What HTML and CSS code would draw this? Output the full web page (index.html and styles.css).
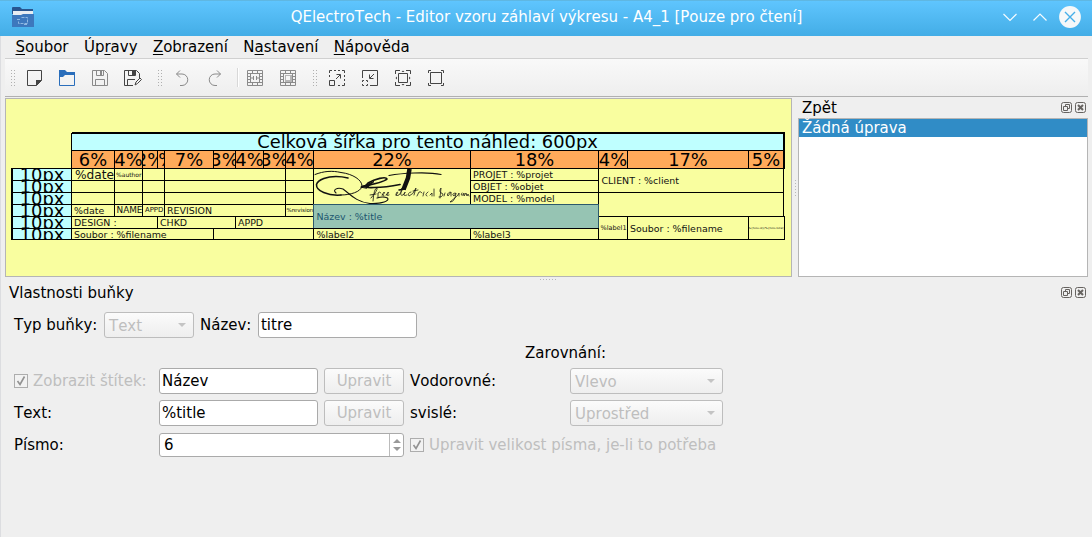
FILE: index.html
```html
<!DOCTYPE html>
<html lang="cs">
<head>
<meta charset="utf-8">
<title>QElectroTech</title>
<link rel="stylesheet" href="styles.css">
</head>
<body>
<header class="titlebar">
  <svg class="app-icon" width="22" height="20" viewBox="0 0 22 20"><path d="M0 1q0-1 1-1h7l2 2h11v5H0z" fill="#28558f"/><path d="M1 4h20v5H1z" fill="#e8edf2"/><path d="M0 8h9l2-1h11v13H0z" fill="#3d78bd"/><path d="M9.500 10.500h6v6h-9v-3M5 12.500h4M12 17.500h4" fill="none" stroke="#8fb8e2" stroke-dasharray="3 1"/></svg>
  <span class="title">QElectroTech - Editor vzoru záhlaví výkresu - A4_1 [Pouze pro čtení]</span>
  <svg class="win-buttons" width="80" height="24" viewBox="0 0 80 24"><path d="M1.500 9l6.500 6.500 6.500-6.500M31.500 15.500L38 9l6.500 6.500" fill="none" stroke="#f4fbff" stroke-width="1.200"/><circle cx="68" cy="12" r="10.900" fill="#f6f8f9"/><path d="M63 7l10 10M73 7L63 17" stroke="#46afe8" stroke-width="1.400"/></svg>
</header>
<nav class="menubar"><span><u>S</u>oubor</span><span>Úp<u>r</u>avy</span><span><u>Z</u>obrazení</span><span>N<u>a</u>stavení</span><span><u>N</u>ápověda</span></nav>
<div class="toolbar">
  <i class="handle"></i>
  <svg class="tool new" viewBox="0 0 16 16"><path d="M.5.5h14v10l-5 5h-9z" class="dark"/><path d="M9 16v-6h6z" fill="#444"/></svg>
  <svg class="tool open" viewBox="0 0 16 16"><path d="M0 0h6l2 2h8v3H6L4 7H0z" fill="#2a6ebb"/><path d="M.5 4v11.500h15V4" fill="none" stroke="#2a6ebb"/></svg>
  <svg class="tool save" viewBox="0 0 16 16"><path d="M.5.500h12l3 3v12H.5zM4.500.500v5h7v-5M3.500 15.500v-6h9v6" class="grey"/><path d="M8 1h2v4H8z" fill="#8a8a8a"/></svg>
  <svg class="tool saveas" viewBox="0 0 18 16"><path d="M9 15.500H.5V.5h12l3 3V8M4.500.500v5h7v-5M3.500 15.500v-6H11" class="dark"/><path d="M8 1h3v4H8z" fill="#444"/><path d="M11 15l1-3 4-4 1.500 1.500-4 4z" class="dark"/></svg>
  <i class="handle second"></i>
  <svg class="tool undo" viewBox="0 0 16 16"><path d="M5 .5l-3.500 3.500L5 7.500M1.500 4H7a5.600 5.600 0 0 1 0 11.500H5" class="grey"/></svg>
  <svg class="tool redo" viewBox="0 0 16 16"><path d="M9 .5L12.500 4 9 7.500M12.500 4H7a5.600 5.600 0 0 0 0 11.500h2" class="grey"/></svg>
  <i class="separator"></i>
  <svg class="tool merge" viewBox="0 0 16 16"><path d="M.5.500h15v15H.5zM0 3.500h16M0 12.500h16M5.500 0v4M10.500 0v4M5.500 12v4M10.500 12v4M0 6.500h4M0 9.500h4M12 6.500h4M12 9.500h4M3.500 4v8M12.500 4v8M6.500 6v4M9.500 6v4M4 8h2M10 8h2" class="grey"/></svg>
  <svg class="tool split" viewBox="0 0 16 16"><path d="M.5.500h15v15H.5zM0 3.500h16M0 12.500h16M5.500 0v4M10.500 0v4M5.500 12v4M10.500 12v4M0 6.500h4M0 9.500h4M12 6.500h4M12 9.500h4M3.500 4v8M12.500 4v8" class="grey"/><path d="M5 5h7v7H5z" fill="#b5b5b5"/><path d="M6 6h4v4H6z" fill="#f5f5f5"/></svg>
  <i class="handle third"></i>
  <svg class="tool zin" viewBox="0 0 16 16"><path d="M.5 3V.5H3M5 .5h2M9 .5h2M13 .5h2.500V3M15.500 5v2M15.500 9v2M15.500 13v2.500H13M11 15.500H9M.5 5v2" class="dark"/><path d="M.5 10.500h5v5h-5zM7 9l4-4M7.500 4.500h4v4" class="dark"/></svg>
  <svg class="tool zout" viewBox="0 0 16 16"><path d="M.5 8V.5h15v15H8" class="dark"/><path d="M.5 12v-1.500H2M4 10.500h1.500V12M5.500 14v1.500H4M2 15.500H.5V14" class="dark"/><path d="M12 4L8 8M7.500 4.500v4h4" class="dark"/></svg>
  <svg class="tool zfit" viewBox="0 0 16 16"><path d="M.5 4V.5H5M11 .5h4.500V4M15.500 12v3.500H11M5 15.500H.5V12M3.500 3.500h9v9h-9z" class="dark"/><path d="M6.500 2L8 .5 9.500 2zM6.500 14L8 15.500 9.500 14zM2 6.500L.5 8 2 9.500zM14 6.500L15.500 8 14 9.500z" fill="#444"/></svg>
  <svg class="tool zone" viewBox="0 0 16 16"><path d="M.5 3V.5H3M13 .5h2.500V3M15.500 13v2.500H13M3 15.500H.5V13M2.500 2.500h11v11h-11z" class="dark"/></svg>
</div>
<main class="work">
  <section class="canvas">
    <div class="template">
      <div class="total">Celková šířka pro tento náhled: 600px</div>
      <div class="pct c1">6%</div><div class="pct c2">4%</div><div class="pct c3">2%</div><div class="pct c4">1%</div><div class="pct c5">7%</div><div class="pct c6">3%</div><div class="pct c7">4%</div><div class="pct c8">3%</div><div class="pct c9">4%</div><div class="pct c10">22%</div><div class="pct c11">18%</div><div class="pct c12">4%</div><div class="pct c13">17%</div><div class="pct c14">5%</div>
      <div class="rowh r1">10px</div><div class="rowh r2">10px</div><div class="rowh r3">10px</div><div class="rowh r4">10px</div><div class="rowh r5">10px</div><div class="rowh r6">10px</div>
      <div class="cell c1 r1 large">%date</div><div class="cell c2 r1 author">%author</div><div class="cell c3-4 r1"></div><div class="cell c5-8 r1"></div><div class="cell c9 r1"></div>
      <div class="cell c1 r2"></div><div class="cell c2 r2"></div><div class="cell c3-4 r2"></div><div class="cell c5-8 r2"></div><div class="cell c9 r2"></div>
      <div class="cell c1 r3"></div><div class="cell c2 r3"></div><div class="cell c3-4 r3"></div><div class="cell c5-8 r3"></div><div class="cell c9 r3"></div>
      <div class="cell c1 r4">%date</div><div class="cell c2 r4 name">NAME</div><div class="cell c3-4 r4 appd">APPD</div><div class="cell c5-8 r4">REVISION</div><div class="cell c9 r4 rev">%revision</div>
      <div class="cell c1-3 r5">DESIGN :</div><div class="cell c4-6 r5">CHKD</div><div class="cell c7-9 r5">APPD</div>
      <div class="cell c1-5 r6">Soubor : %filename</div><div class="cell c6-9 r6"></div><div class="cell c10 r6">%label2</div><div class="cell c11 r6">%label3</div>
      <div class="cell c10 r1-3 logo">
        <svg width="156" height="35" viewBox="314 169 156 35" fill="none" stroke="#111" stroke-linecap="round" stroke-linejoin="round">
          <path d="M315 174.500C324 171 332 170.500 341 172.500C353 174 362 180 362 186C361 192 350 195 341 195" stroke-width="1"/>
          <path d="M341 195C328 196 316 191 316.500 184.500C318 179 328 176.500 336 176.500Q342 176.500 348 178" stroke-width="1.500"/>
          <path d="M336 193C332 190 337 187 343 189C350 194 356 202 370 203.500C382 204 390 201 387.500 198Q383 196 377 198" stroke-width="1.100"/>
          <path d="M362 186.500C370 185 384 182 387 179C386 176 375 179 368 183C364 187 366 188 374 187.500Q386 187.500 400 184.500" stroke-width="1.700"/>
          <path d="M361 187L374 181.500L367 188z" fill="#111"/>
          <path d="M409.500 169L408 178L403.500 189.500" stroke-width="4.500" stroke-linecap="butt"/><path d="M389 175.500Q400 173.500 414 173Q431 172.300 441 174.500" stroke-width="1.200"/><path d="M399 190L405 189" stroke-width="1.500"/>
          <path d="M371 198Q378 190 377 188Q374 188 373 201M370 195L376 194M378 197V193Q380 191 381 193M382 195Q386 193 384 192Q381 196 384 196M386 195Q390 193 388 192Q385 197 389 195" stroke-width=".8"/>
          <path d="M396 195Q399 192 397 192Q394 197 399 195Q403 190 402 188Q399 197 403 195Q406 192 405 192Q402 197 407 195M411 192Q407 193 409 196Q413 195 416 188L414 195M413 191L418 190M417 196L419 192Q421 191 422 193M424 192L423 196M428 192Q424 195 427 196M430 195L432 193V196M434 189V196" stroke-width=".75"/>
          <path d="M440 198L441 188Q438 192 443 194Q443 197 439 197M445 193L444 196M450 192Q446 194 448 196L451 192V196M455 193Q451 194 454 196L456 193Q455 202 450 202Q455 198 458 195L459 193L459 196M462 193Q460 196 463 195L464 193L464 196L466 193L467 196L468 194L469 196" stroke-width=".75"/>
        </svg>
      </div>
      <div class="cell c11 r1">PROJET : %projet</div><div class="cell c11 r2">OBJET : %objet</div><div class="cell c11 r3">MODEL : %model</div>
      <div class="cell c12-14 r1-2 short">CLIENT : %client</div><div class="cell c12-14 r3-4 short"></div>
      <div class="cell c12 r5-6 small">%label1</div><div class="cell c13 r5-6">Soubor : %filename</div><div class="cell c14 r5-6 tiny">%{folio-id}/%{folio-total}</div>
      <div class="cell c10-11 r4-5 selected">Název : %title</div>
    </div>
  </section>
  <div class="vsplit"></div>
  <aside class="undo-dock">
    <div class="dock-head"><span>Zpět</span><svg class="dock-buttons" width="25" height="11" viewBox="0 0 25 11"><use href="#float"/><use href="#close"/></svg></div>
    <div class="list"><div class="list-item">Žádná úprava</div></div>
  </aside>
</main>
<div class="hsplit"></div>
<section class="props">
  <div class="dock-head props-head"><span>Vlastnosti buňky</span><svg class="dock-buttons" width="25" height="11" viewBox="0 0 25 11"><defs><g id="float" fill="none" stroke="#666360"><rect x=".5" y=".5" width="10" height="10" rx="2"/><path d="M4.500 4V2.500h4v4H7M2.500 4.500h4v4h-4z"/></g><g id="close" fill="none" stroke="#666360"><rect x="14.500" y=".5" width="10" height="10" rx="2"/><path d="M17 3l5 5M22 3l-5 5" stroke-width="2"/></g></defs><use href="#float"/><use href="#close"/></svg></div>
  <div class="type-row"><span class="type-label">Typ buňky:</span><div class="combo type-combo">Text<i class="down"></i></div><span class="name-label">Název:</span><div class="input name-input">titre</div></div>
  <div class="form">
    <span class="align-title">Zarovnání:</span>
    <span class="check label-check"><svg width="14" height="14" viewBox="0 0 14 14"><rect x=".5" y=".5" width="13" height="13" fill="#f2f2f2" stroke="#adadad"/><path d="M3.500 7L6 10.500l4.500-8" fill="none" stroke="#929292" stroke-width="1.600"/></svg>Zobrazit štítek:</span>
    <div class="input">Název</div><div class="button">Upravit</div><span>Vodorovné:</span><div class="combo">Vlevo<i class="down"></i></div>
    <span>Text:</span><div class="input">%title</div><div class="button">Upravit</div><span>svislé:</span><div class="combo">Uprostřed<i class="down"></i></div>
    <span>Písmo:</span><div class="input spin"><span>6</span><div class="spin-buttons"><i class="up"></i><i class="down"></i></div></div>
    <span class="check fit-check"><svg width="14" height="14" viewBox="0 0 14 14"><rect x=".5" y=".5" width="13" height="13" fill="#f2f2f2" stroke="#adadad"/><path d="M3.500 7L6 10.500l4.500-8" fill="none" stroke="#929292" stroke-width="1.600"/></svg>Upravit velikost písma, je-li to potřeba</span>
  </div>
</section>
</body>
</html>
```
FILE: styles.css
```css
* { box-sizing: border-box; }
body { margin: 0; width: 1092px; height: 537px; overflow: hidden; background: #efefef; box-shadow: inset 1px 0 #dcdde0; color: #000; font: 16.66px/20px "DejaVu Sans Condensed", "DejaVu Sans", sans-serif; font-stretch: condensed; font-kerning: none; white-space: nowrap; }
svg { display: block; flex: none; }
.titlebar { display: grid; grid-template-columns: 80px 1fr 80px; align-items: center; height: 36px; padding: 0 10px 3px 12px; border-top: 1px solid #5fb7e2; background: linear-gradient(#5fc5fe, #43ade6); color: #fff; }
.title { text-align: center; padding-right: 1px; }
.menubar { display: flex; gap: 15.400px; height: 22px; padding: 1px 0 0 15.500px; }
.menubar u { text-decoration-thickness: 1px; text-underline-offset: 2px; }
.toolbar { display: flex; align-items: center; height: 39px; margin: 0 4px 0 5px; padding-left: 5px; border-top: 1px solid #d0d0d0; border-bottom: 1px solid #b0b0b0; background: linear-gradient(#f9f9f9, #eee); }
.tool { width: 16px; height: 16px; margin-right: 17px; }
.new { margin-left: 12px; margin-right: 16px; }
.save { margin-right: 16px; }
.saveas { width: 18px; margin-right: 15px; }
.dark { fill: none; stroke: #444; }
.grey { fill: none; stroke: #8a8a8a; }
.handle { width: 5px; height: 17px; background: radial-gradient(circle, #b0b0b0 0 .7px, transparent .9px) 0 0 / 3px 3px; }
.second { margin-right: 13px; }
.undo { margin-right: 17px; }
.separator { width: 2px; height: 19px; background: #d8d8d8; margin: 0 9px 0 -4px; border-right: 1px solid #fff; }
.merge { margin-left: -1px; }
.third { margin: 0 12px 0 -1px; }
.work { display: flex; height: 179px; margin: 1px 4px 0 5px; }
.canvas { width: 787px; border: 1px solid #b5b5b5; background: #f9fe9f; padding: 33px 0 0 5px; overflow: hidden; }
.template { display: grid; width: 774px; padding: 2px 1px 1px 1px; gap: 1px; grid-template-columns: 59px 42px 27px 14px 6px 48px 21px 27px 21px 27px 156px 127px 28px 120px 35px; grid-template-rows: 16px 17px repeat(5, 11px) 10px; font: 17.85px/20px "DejaVu Sans", sans-serif; font-stretch: normal; }
.total, .pct, .rowh { display: flex; align-items: center; justify-content: center; overflow: hidden; outline: 1px solid #000; background: #bfffff; }
.total { grid-column: 2 / -1; grid-row: 1; box-shadow: 0 -2px #000, 1px -2px #000; border-right: 1px solid #000; }
.pct { grid-row: 2; background: #ffaa5a; }
.pct.c14 { border-right: 1px solid #000; }
.rowh { grid-column: 1; border-left: 1px solid #000; padding-top: 1px; }
.cell { display: flex; align-items: center; overflow: hidden; outline: 1px solid #000; padding-left: 2px; font-size: 9.45px; line-height: 11px; color: #111; }
.c1 { grid-column: 2; } .c2 { grid-column: 3; } .c3 { grid-column: 4; } .c4 { grid-column: 5; } .c5 { grid-column: 6; } .c6 { grid-column: 7; } .c7 { grid-column: 8; } .c8 { grid-column: 9; } .c9 { grid-column: 10; } .c10 { grid-column: 11; } .c11 { grid-column: 12; } .c12 { grid-column: 13; } .c13 { grid-column: 14; } .c14 { grid-column: 15; }
.c3-4 { grid-column: 4 / 6; } .c5-8 { grid-column: 6 / 10; } .c1-3 { grid-column: 2 / 5; } .c4-6 { grid-column: 5 / 8; } .c7-9 { grid-column: 8 / 11; } .c1-5 { grid-column: 2 / 7; } .c6-9 { grid-column: 7 / 11; } .c12-14 { grid-column: 13 / 16; } .c10-11 { grid-column: 11 / 13; }
.r1 { grid-row: 3; } .r2 { grid-row: 4; } .r3 { grid-row: 5; } .r4 { grid-row: 6; } .r5 { grid-row: 7; } .r6 { grid-row: 8; }
.r1-2 { grid-row: 3 / 5; } .r1-3 { grid-row: 3 / 6; } .r3-4 { grid-row: 5 / 7; } .r4-5 { grid-row: 6 / 8; } .r5-6 { grid-row: 7 / 9; }
.c10, .c12, .c12-14 { padding-left: 2.500px; }
.large { font-size: 12.2px; padding: 1px 0 0 3px; }
.small { font-size: 6.500px; padding-left: 1.500px; }
.author { font-size: 6px; padding-left: 1px; }
.name { font-size: 8.900px; padding-left: 1.500px; }
.appd { font-size: 6.900px; }
.rev { font-size: 5.500px; padding-left: .5px; }
.tiny { font-size: 2.800px; padding-left: 0; justify-content: center; }
.logo, .pct { padding: 0; }
.short { margin-right: 1px; }
.selected { background: #96c4b3; color: #20566f; box-shadow: 0 -1px #2c596c; outline: 0; margin: 0 -1px; padding-left: 2.500px; z-index: 1; border: solid #2c596c; border-width: 0 1px; }
.vsplit { width: 6px; height: 17px; margin-top: 81px; background: radial-gradient(circle, #b8b8b8 0 .6px, transparent .8px) 2px 0 / 3px 3px; background-clip: content-box; padding-left: 2px; }
.undo-dock { width: 290px; display: flex; flex-direction: column; }
.dock-head { display: flex; align-items: center; justify-content: space-between; height: 20px; padding: 0 2px 0 4px; }
.dock-head svg { margin-bottom: 1px; }
.list { flex: 1; border: 1px solid #b5b5b5; background: #fff; }
.list-item { height: 18px; line-height: 18px; padding-left: 3px; background: #308cc6; color: #fff; }
.hsplit { width: 18px; height: 3px; margin: 1px 0 2px 539px; background: radial-gradient(circle, #b8b8b8 0 .6px, transparent .8px) 0 0 / 3px 3px; }
.props-head { padding: 0 6px 0 9px; height: 20px; }
.props-head svg { margin-bottom: 2px; }
.type-row { display: flex; align-items: center; height: 26px; margin: 9px 0 4px 14px; }
.type-label { width: 90px; }
.name-label { width: 58px; margin-left: 6px; }
.form { display: grid; grid-template-columns: 139px 159px 80px 154px 153px; grid-template-rows: 20px 26px 26px 26px; gap: 6px; align-items: center; padding-left: 14px; }
.align-title { grid-column: 4 / 6; text-align: center; padding: 2px 2px 0 0; }
.input, .combo, .button { height: 26px; line-height: 23px; border: 1px solid #aaa; border-radius: 3px; background: #fff; padding-left: 2px; }
.name-input { width: 159px; }
.combo, .button { border-color: #bdbdbd; background: linear-gradient(#fbfbfb, #eee); color: #bebebe; }
.combo { display: flex; align-items: center; justify-content: space-between; padding: 0 7px 0 4px; }
.type-combo { width: 90px; }
.button { text-align: center; padding: 0; }
.check { display: flex; align-items: center; gap: 5px; color: #bebebe; }
.fit-check { grid-column: 4 / 6; }
.down { width: 0; height: 0; border: 4px solid transparent; border-top-color: #c4c4c4; border-bottom: 0; }
.up { width: 0; height: 0; border: 4px solid transparent; border-bottom-color: #999; border-top: 0; }
.spin { grid-column: 2 / 4; display: flex; justify-content: space-between; height: 24px; line-height: 21px; padding-left: 4px; }
.spin-buttons { width: 14px; border-left: 1px solid #bbb; display: flex; flex-direction: column; align-items: center; justify-content: space-evenly; }
.spin .down { border-top-color: #999; }
```
